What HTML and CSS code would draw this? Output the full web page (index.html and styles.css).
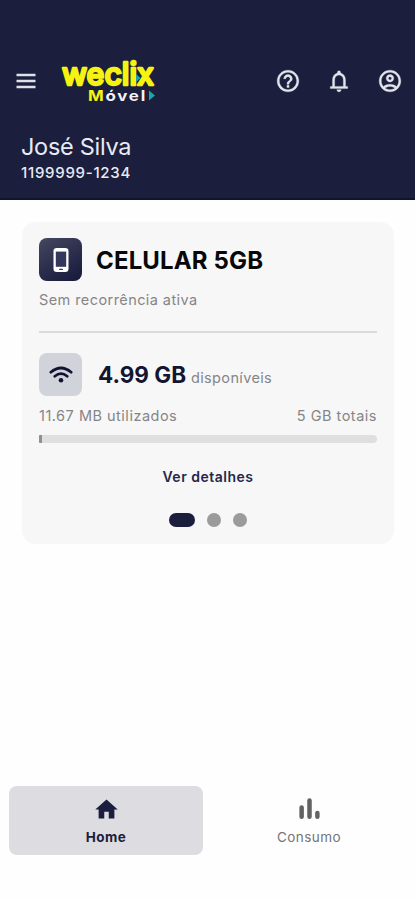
FILE: index.html
```html
<!DOCTYPE html>
<html lang="pt-BR">
<head>
<meta charset="utf-8">
<title>Weclix Móvel</title>
<link rel="stylesheet" href="styles.css">
</head>
<body>
<header class="header">
  <div class="toolbar">
    <svg class="menu" viewBox="0 0 20 16"><path d="M.5 2h19M.5 8h19M.5 14h19"/></svg>
    <svg class="logo" viewBox="0 0 98 48" role="img" aria-label="weclix Móvel">
      <text class="logo-main" x="3" y="28" textLength="92" lengthAdjust="spacingAndGlyphs">weclix</text>
      <path class="logo-arrow" d="M77 17l4.500 4-4.500 4z"/>
      <text class="logo-sub" x="29" y="43.500" textLength="59" lengthAdjust="spacingAndGlyphs"><tspan class="logo-m">M</tspan>óvel</text>
      <path class="logo-arrow" d="M90 33.500l6 5-6 5z"/>
    </svg>
    <div class="actions">
      <svg class="icon" viewBox="0 0 24 24"><path d="M11 18h2v-2h-2v2zm1-16C6.480 2 2 6.480 2 12s4.480 10 10 10 10-4.480 10-10S17.520 2 12 2zm0 18c-4.410 0-8-3.590-8-8s3.590-8 8-8 8 3.590 8 8-3.590 8-8 8zm0-14c-2.210 0-4 1.790-4 4h2c0-1.100.9-2 2-2s2 .9 2 2c0 2-3 1.750-3 5h2c0-2.250 3-2.500 3-5 0-2.210-1.790-4-4-4z"/></svg>
      <svg class="icon" viewBox="0 0 24 24"><path d="M12 22c1.100 0 2-.9 2-2h-4c0 1.100.9 2 2 2zm6-5v-6c0-3.070-1.630-5.640-4.500-6.320V4c0-.83-.67-1.500-1.500-1.500s-1.500.67-1.500 1.500v.68C7.640 5.360 6 7.920 6 11v6H4v2h16v-2h-2zm-2 0H8v-6c0-2.480 1.510-4.500 4-4.500s4 2.020 4 4.500v6z"/></svg>
      <svg class="icon" viewBox="0 0 24 24"><path d="M12 2C6.480 2 2 6.480 2 12s4.480 10 10 10 10-4.480 10-10S17.520 2 12 2zM7.350 18.500C8.660 17.560 10.260 17 12 17s3.340.56 4.650 1.500C15.340 19.440 13.740 20 12 20s-3.340-.56-4.650-1.500zm10.790-1.380C16.450 15.800 14.320 15 12 15s-4.450.8-6.140 2.120C4.700 15.730 4 13.950 4 12c0-4.420 3.580-8 8-8s8 3.580 8 8c0 1.950-.7 3.730-1.860 5.120zM12 6c-1.930 0-3.500 1.570-3.500 3.500S10.070 13 12 13s3.500-1.570 3.500-3.500S13.930 6 12 6zm0 5c-.83 0-1.500-.67-1.500-1.500S11.170 8 12 8s1.500.67 1.500 1.500S12.830 11 12 11z"/></svg>
    </div>
  </div>
  <div class="user"><span class="name">José Silva</span></div>
  <div class="number"><span class="phone">1199999-1234</span></div>
</header>
<main class="main">
  <section class="card">
    <div class="plan">
      <div class="tile tile-dark"><svg viewBox="0 0 16 24"><rect class="phone-body" x=".5" y="0" width="15" height="24" rx="3.200"/><rect class="phone-screen" x="2.800" y="3.600" width="10.400" height="15.200"/><rect class="phone-screen" x="6" y="20.700" width="4" height="1.200" rx=".6"/></svg></div>
      <h1 class="plan-name">CELULAR 5GB</h1>
    </div>
    <p class="recurrence">Sem recorrência ativa</p>
    <hr class="divider">
    <div class="balance">
      <div class="tile tile-light"><svg viewBox="0 0 24 18"><path class="wave" d="M1.800 6.200Q12-2.200 22.200 6.200M5.800 10.300Q12 5.100 18.200 10.300"/><circle cx="12" cy="14.200" r="2.300"/></svg></div>
      <strong class="amount">4.99 GB</strong><span class="available">disponíveis</span>
    </div>
    <div class="usage"><span class="used">11.67 MB utilizados</span><span class="total">5 GB totais</span></div>
    <div class="bar"><div class="fill"></div></div>
    <a class="details">Ver detalhes</a>
    <div class="dots"><i class="dot dot-active"></i><i class="dot"></i><i class="dot"></i></div>
  </section>
</main>
<nav class="nav">
  <a class="tab tab-active"><svg viewBox="0 0 24 24"><path d="M10 20v-6h4v6h5v-8h3L12 3 2 12h3v8z"/></svg><span class="home">Home</span></a>
  <a class="tab"><svg viewBox="0 0 24 24"><path class="chart" d="M5 10.200v8.300M12 4v14.500M19 15v3.500"/></svg><span class="consumo">Consumo</span></a>
</nav>
</body>
</html>
```
FILE: styles.css
```css
* { box-sizing: border-box; margin: 0; }
body { height: 900px; display: flex; flex-direction: column; background: #fefefe; font-family: Inter, "Liberation Sans", sans-serif; color: #858587; overflow: hidden; }
svg { display: block; flex: none; }
span, strong { white-space: nowrap; }

.header { height: 200px; padding: 57px 12px 0 16px; background: #1b1e3d; border-bottom: 2px solid #11132f; color: #e9eaf2; }
.toolbar { display: flex; align-items: center; height: 48px; }
.menu { width: 20px; height: 16px; stroke: #dfe0ea; stroke-width: 2.3; }
.logo { width: 98px; height: 48px; margin-left: 23px; overflow: visible; }
.logo-main { font: 500 31px Inter, sans-serif; fill: #f6f312; stroke: #f6f312; stroke-width: 2.4; stroke-linejoin: round; }
.logo-sub { font: 700 14.5px Inter, sans-serif; letter-spacing: 1.5px; fill: #f2f3f8; }
.logo-m { fill: #f6f312; }
.logo-arrow { fill: #1aa6a6; }
.actions { display: flex; gap: 25px; margin-left: auto; }
.icon { width: 26px; height: 26px; fill: #e4e5ec; stroke: #e4e5ec; stroke-width: .3; }
.user { height: 28px; margin: 28px 0 0 5px; font-size: 23.5px; line-height: 28px; letter-spacing: -.3px; }
.number { height: 20px; margin: 2px 0 0 5px; font-size: 15px; line-height: 20px; font-weight: 500; letter-spacing: .72px; }

.main { flex: 1; padding: 22px 21px 0 22px; }
.card { height: 322px; padding: 16px 17px 0; border-radius: 14px; background: #f7f7f7; }
.plan { display: flex; align-items: center; height: 43px; gap: 14px; }
.tile { display: flex; align-items: center; justify-content: center; width: 43px; height: 43px; border-radius: 8px; flex: none; }
.tile-dark { background: linear-gradient(150deg, #45485f, #2a2c4b 55%, #17193b); }
.tile-dark svg { width: 16px; height: 24px; }
.phone-body { fill: #fff; }
.phone-screen { fill: #34365a; }
.plan-name { padding-top: 2px; font-size: 24px; line-height: 30px; font-weight: 700; letter-spacing: .15px; color: #08080a; white-space: nowrap; }
.recurrence { margin-top: 9px; font-size: 14.5px; line-height: 20px; letter-spacing: .42px; }
.divider { height: 2px; margin-top: 21px; border: 0; background: #dadadc; }
.balance { display: flex; align-items: baseline; height: 43px; margin-top: 20px; }
.tile-light { align-self: center; background: #d1d3da; }
.tile-light svg { width: 24px; height: 18px; fill: #111331; }
.wave { fill: none; stroke: #111331; stroke-width: 2.700; stroke-linecap: round; }
.amount { margin-left: 16px; font-size: 22.5px; line-height: 43px; font-weight: 700; color: #14152f; }
.available { margin-left: 5px; font-size: 14.5px; letter-spacing: .35px; }
.usage { display: flex; justify-content: space-between; height: 20px; margin-top: 10px; font-size: 14.5px; line-height: 20px; letter-spacing: .5px; }
.bar { height: 8px; margin-top: 9px; border-radius: 1px 4px 4px 1px; background: #dfdfdf; overflow: hidden; }
.fill { width: 3px; height: 8px; background: #8f8f91; }
.details { display: block; margin-top: 24px; text-align: center; font-size: 14px; line-height: 20px; font-weight: 600; letter-spacing: .5px; color: #25274a; }
.dots { display: flex; justify-content: center; gap: 12px; margin-top: 26px; }
.dot { width: 14px; height: 14px; border-radius: 7px; background: #9b9b9b; }
.dot-active { width: 26px; background: #1b1e3d; }

.nav { display: flex; gap: 9px; height: 114px; padding: 0 9px; }
.tab { display: flex; flex-direction: column; align-items: center; width: 194px; height: 69px; padding-top: 10px; border-radius: 8px; font-size: 13.5px; line-height: 20px; letter-spacing: .45px; color: #747476; }
.tab-active { background: #dcdce1; color: #1b1e3d; font-weight: 700; }
.tab svg { width: 27px; height: 27px; margin-bottom: 4px; fill: #1b1e3d; }
.tab .chart { fill: none; stroke: #626264; stroke-width: 4; stroke-linecap: round; }
```
